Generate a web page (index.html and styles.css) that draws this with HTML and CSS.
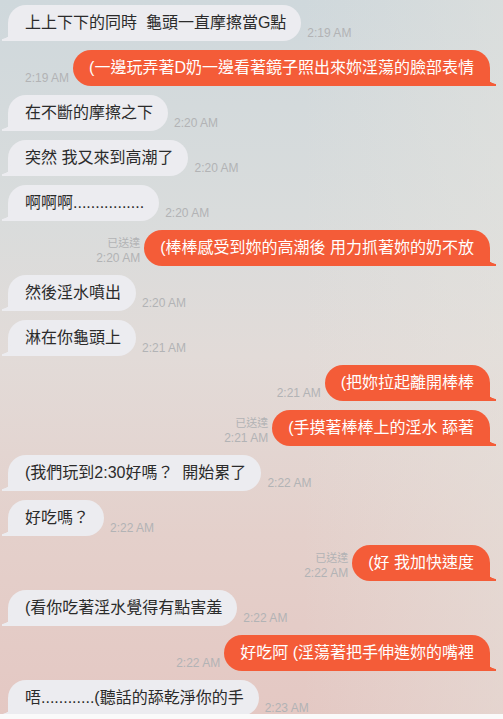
FILE: index.html
```html
<!DOCTYPE html>
<html lang="zh-Hant">
<head>
  <meta charset="UTF-8">
  <meta name="viewport" content="width=device-width, initial-scale=1.0">

  <link rel="stylesheet" href="styles.css">

  <title>聊天</title>
</head>
<body>
  <div class="chat">
    <div class="row in">
      <div class="bubble">上上下下的同時  龜頭一直摩擦當G點</div>
      <div class="meta"><span>2:19 AM</span></div>
    </div>

    <div class="row out">
      <div class="meta"><span>2:19 AM</span></div>
      <div class="bubble">(一邊玩弄著D奶一邊看著鏡子照出來妳淫蕩的臉部表情</div>
    </div>

    <div class="row in">
      <div class="bubble">在不斷的摩擦之下</div>
      <div class="meta"><span>2:20 AM</span></div>
    </div>

    <div class="row in">
      <div class="bubble">突然 我又來到高潮了</div>
      <div class="meta"><span>2:20 AM</span></div>
    </div>

    <div class="row in">
      <div class="bubble">啊啊啊................</div>
      <div class="meta"><span>2:20 AM</span></div>
    </div>

    <div class="row out">
      <div class="meta"><span class="read">已送達</span><span>2:20 AM</span></div>
      <div class="bubble">(棒棒感受到妳的高潮後 用力抓著妳的奶不放</div>
    </div>

    <div class="row in">
      <div class="bubble">然後淫水噴出</div>
      <div class="meta"><span>2:20 AM</span></div>
    </div>

    <div class="row in">
      <div class="bubble">淋在你龜頭上</div>
      <div class="meta"><span>2:21 AM</span></div>
    </div>

    <div class="row out">
      <div class="meta"><span>2:21 AM</span></div>
      <div class="bubble">(把妳拉起離開棒棒</div>
    </div>

    <div class="row out">
      <div class="meta"><span class="read">已送達</span><span>2:21 AM</span></div>
      <div class="bubble">(手摸著棒棒上的淫水 舔著</div>
    </div>

    <div class="row in">
      <div class="bubble">(我們玩到2:30好嗎？  開始累了</div>
      <div class="meta"><span>2:22 AM</span></div>
    </div>

    <div class="row in">
      <div class="bubble">好吃嗎？</div>
      <div class="meta"><span>2:22 AM</span></div>
    </div>

    <div class="row out">
      <div class="meta"><span class="read">已送達</span><span>2:22 AM</span></div>
      <div class="bubble">(好 我加快速度</div>
    </div>

    <div class="row in">
      <div class="bubble">(看你吃著淫水覺得有點害羞</div>
      <div class="meta"><span>2:22 AM</span></div>
    </div>

    <div class="row out">
      <div class="meta"><span>2:22 AM</span></div>
      <div class="bubble">好吃阿 (淫蕩著把手伸進妳的嘴裡</div>
    </div>

    <div class="row in">
      <div class="bubble">唔............(聽話的舔乾淨你的手</div>
      <div class="meta"><span>2:23 AM</span></div>
    </div>
  </div>

  <div class="footer"></div>
</body>
</html>
```

FILE: styles.css
```css
html, body {
  margin: 0;
  height: 100%;
  overflow: hidden;
  background-color: #fff;
  font-family: "Liberation Sans", "Noto Sans CJK TC", sans-serif;
}

.chat {
  height: 714px;
  box-sizing: border-box;
  padding: 5px 13px 0 8px;
  overflow: hidden;
  background:
    linear-gradient(to right, rgba(255, 255, 255, 0) 60%, rgba(230, 228, 222, 0.45) 100%),
    linear-gradient(to bottom, #cfd8dc 0%, #d9dcdc 30%, #e2dbd8 50%, #e4d0cb 75%, #e4c8c3 100%);
}

.footer {
  height: 5px;
  background-color: #fafafa;
}

.row {
  display: flex;
  align-items: flex-end;
  margin-bottom: 9px;
}

.row.out {
  justify-content: flex-end;
}

.bubble {
  position: relative;
  height: 36px;
  line-height: 36px;
  padding: 0 16px;
  border-radius: 18px;
  font-size: 16px;
  white-space: pre;
}

.in .bubble {
  padding: 0 15px 0 17px;
  background-color: #ececf0;
  color: #2b2b2b;
  border-bottom-left-radius: 4px;
}

.out .bubble {
  background-color: #f45c38;
  color: #fff;
  border-bottom-right-radius: 4px;
}

/* bubble tails */
.bubble::after {
  content: "";
  position: absolute;
  bottom: 0;
  width: 12px;
  height: 11px;
  background-color: inherit;
}

.in .bubble::after {
  left: -6px;
  -webkit-mask: radial-gradient(circle at 0 0, transparent 8.5px, #000 9px);
  mask: radial-gradient(circle at 0 0, transparent 8.5px, #000 9px);
}

.out .bubble::after {
  right: -6px;
  -webkit-mask: radial-gradient(circle at 100% 0, transparent 8.5px, #000 9px);
  mask: radial-gradient(circle at 100% 0, transparent 8.5px, #000 9px);
}

.meta {
  display: flex;
  flex-direction: column;
  font-size: 12px;
  line-height: 15px;
  color: #b2b3b5;
  white-space: nowrap;
}

.in .meta {
  margin-left: 6px;
}

.out .meta {
  margin-right: 4px;
  align-items: flex-end;
}

.meta .read {
  font-size: 11px;
}
```
